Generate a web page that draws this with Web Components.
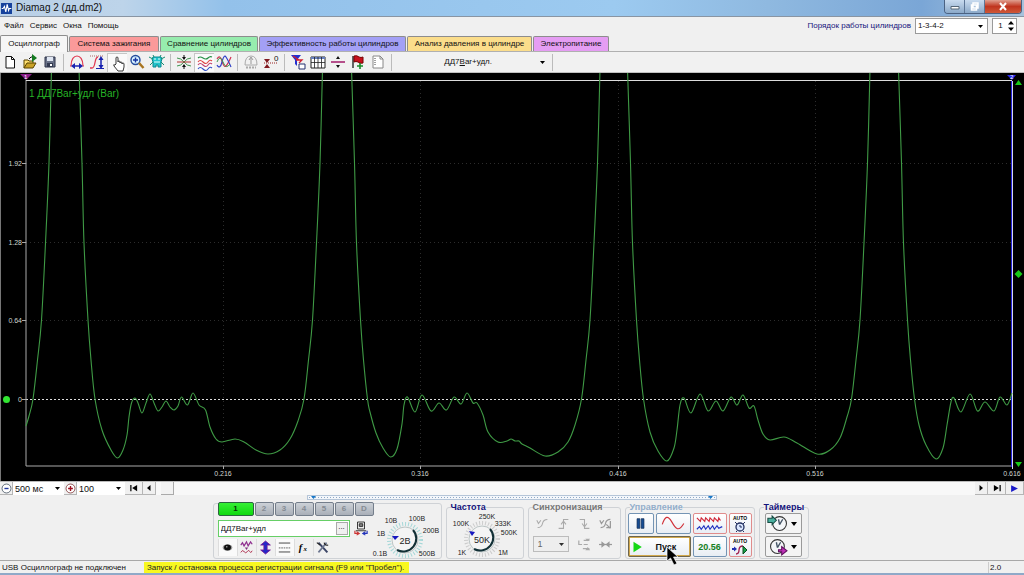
<!DOCTYPE html>
<html lang="ru">
<head>
<meta charset="utf-8">
<title>Diamag 2</title>
<style>
html,body{margin:0;background:#f0f0f0}
body{font:9px/12px "Liberation Sans",Arial,sans-serif;color:#111}
</style>
</head>
<body>
<diamag-app></diamag-app>
<script>
const BASE = `*{box-sizing:border-box}button,select,input{font:inherit;color:inherit;margin:0;padding:0;border-radius:0}
button{display:inline-flex;align-items:center;justify-content:center;background:none;border:0}
select{appearance:none;background:#fff url("data:image/svg+xml,%3Csvg xmlns='http://www.w3.org/2000/svg' width='5' height='3'%3E%3Cpath d='M0 0h5L2.5 3z'/%3E%3C/svg%3E") no-repeat right 4px center;border:0}`;
function define(name, css, html) {
  customElements.define(name, class extends HTMLElement {
    constructor() {
      super();
      this.attachShadow({mode: 'open'});
    }
    connectedCallback() {
      const body = typeof html === 'function' ? html(this) : html;
      this.shadowRoot.innerHTML = `<style>${BASE}${css}</style>${body}`;
    }
  });
}

const ICONS = {
  new: '<path d="M4 2.5h5.500l3 3v8.500h-8.500z" fill="#fff" stroke="#111"/><path d="M9.500 2.500v3h3" fill="none" stroke="#111"/>',
  open: '<path d="M2 14V6h4l1 1h4v2" fill="#ffe070" stroke="#5a4400"/><path d="M2 14l3-5h9l-3 5z" fill="#c9a227" stroke="#5a4400"/><path d="M7 5q2-3 4-2" fill="none" stroke="#111"/><path d="M10 0l5 4-5 4z" fill="#137a20"/>',
  save: '<path d="M3 3h10v10H3z" fill="#6a7288" stroke="#2c3348"/><path d="M5 3h6v4H5z" fill="#dfe6f2"/><path d="M5 9h6v4H5z" fill="#333a50"/><path d="M8 10h2v2H8z" fill="#fff"/>',
  period: '<path d="M1 12h1C2 5 5 2 8 2s6 3 6 10h1" fill="none" stroke="#e03850" stroke-width="1.200"/><path d="M4 12h8" stroke="#1822b0" stroke-width="1.500"/><path d="M6 9l-4 3 4 3zM10 9l4 3-4 3z" fill="#1822b0"/>',
  amplitude: '<path d="M1 14h2c4 0 2-11 6-11" fill="none" stroke="#e03850" stroke-width="1.300"/><path d="M1 2h14" stroke="#a66" stroke-dasharray="1 1"/><path d="M12 5v7" stroke="#1822b0" stroke-width="1.500"/><path d="M9.500 6l2.500-4 2.500 4zM9.500 11l2.500 4 2.500-4z" fill="#1822b0"/><path d="M7 14.500h8" stroke="#1822b0"/>',
  hand: '<path d="M6 9V3q0-1 1-1t1 1v4q0-1 1-1t1 1v1q0-1 1-1t1 1v1q0-1 1-1t1 1v3l-1 4H8l-4-5q-1-2 1-1z" fill="#fff" stroke="#222" stroke-width=".9"/>',
  zoom: '<circle cx="6.500" cy="6" r="4.500" fill="#d6f0ff" stroke="#244c9c" stroke-width="1.400"/><path d="M4 6h5M6.500 3.500v5" stroke="#1330a0" stroke-width="1.400"/><path d="M10 9l4.500 5" stroke="#a87420" stroke-width="2.500"/>',
  probe: '<path d="M4 3h8l1 2-1 3v5H9v-2H7v2H4V8L3 5z" fill="#20c4cc" stroke="#0a8890"/><path d="M0 3l4 2M16 3l-4 2M1 11l3-3M15 11l-3-3M5 3l-1-2M11 3l1-2" stroke="#148c70"/><path d="M5 5h2M9 5h2M5 8h6" stroke="#e6ffff"/>',
  compress: '<path d="M1 4q4 0 7 4t7 4M1 12q4 0 7-4t7-4" fill="none" stroke="#3e9550"/><path d="M1 8h14" stroke="#b03030"/><path d="M8 1v4M8 11v4" stroke="#111"/><path d="M6 3h4L8 6zM6 13h4l-2-3z" fill="#111"/>',
  waves: '<path d="M1 3q2-2 5 0t5 0 4-1" fill="none" stroke="#208c40" stroke-width="1.100"/><path d="M1 7q2-3 5 0t5 0 4-1" fill="none" stroke="#e04040" stroke-width="1.100"/><path d="M1 10q2-3 5 0t5 0 4-1" fill="none" stroke="#c04070" stroke-width="1.100"/><path d="M1 14q2-3 5 0t5 0 4-1" fill="none" stroke="#3050c8" stroke-width="1.100"/>',
  overlap: '<path d="M1 5q3-5 5 2t4 5 5-9" fill="none" stroke="#d03050" stroke-width="1.200"/><path d="M1 11q3 5 5-3t4-5 5 10" fill="none" stroke="#3040c8" stroke-width="1.200"/><path d="M1 8q3-8 6 0t7 2" fill="none" stroke="#409850"/>',
  autocal: '<path d="M2 11q0-9 6-9t6 9z" fill="none" stroke="#aaa"/><path d="M8 4v6M6 6l2-3 2 3" stroke="#999" fill="none"/><path d="M3 13.500h10" stroke="#aaa" stroke-width="2" stroke-dasharray="2 1"/>',
  zero: '<path d="M1 9h14" stroke="#922" stroke-dasharray="1 1"/><path d="M1 5h6L4 9zM1 14h6l-3-4z" fill="#801820"/><text x="11" y="7" font-size="8" fill="#111">0</text>',
  filter: '<path d="M1 1h10L7 6v6L5 10V6z" fill="#2430d0"/><path d="M3 2l6 4M6 6h6l-3 3" stroke="#d02030" fill="none" stroke-width="1.300"/><path d="M9 10h6v5H9z" fill="#fff" stroke="#243070"/>',
  table: '<path d="M1 3h14v11H1z" fill="#fff" stroke="#222"/><path d="M1 3h14v2H1z" fill="#6880c0"/><path d="M4.500 3v11M8 3v11M11.500 3v11M1 8.500h14" stroke="#222" stroke-width=".8"/>',
  divide: '<path d="M1 8h14" stroke="#a01868" stroke-width="1.500"/><path d="M6 5h4L8 2zM6 11h4l-2 3z" fill="#111"/>',
  flag: '<path d="M3 2v12" stroke="#333" stroke-width="1.500"/><path d="M4 2q3-1 5 1 2 1 4 0v6q-3 1-5-1-2-1-4 0z" fill="#c8101c" stroke="#700"/><path d="M10 9v6M7 12h6" stroke="#188c28" stroke-width="1.600"/>',
  notes: '<path d="M3 2h7l3 3v9H3z" fill="#fff" stroke="#888"/><path d="M5 4v8" stroke="#444" stroke-dasharray="1 1"/><path d="M10 2v3h3" fill="none" stroke="#888"/>',
  app: '<path d="M0 0h16v16H0z" fill="#16429c"/><path d="M1 8h2l2-3 2 8 2-11 2 9 1-3h3" fill="none" stroke="#fff" stroke-width="1.600"/>',
  minus: '<circle cx="8" cy="8" r="6.500" fill="#fff" stroke="#234"/><path d="M5 8h6" stroke="#22389c" stroke-width="2"/>',
  plus: '<circle cx="8" cy="8" r="6.500" fill="#fff" stroke="#611"/><path d="M4.500 8h7M8 4.500v7" stroke="#a01020" stroke-width="2"/>',
  first: '<path d="M2 3h2v10H2zM13 3v10L5 8z"/>', prev: '<path d="M11 2v12L4 8z"/>', next: '<path d="M5 2v12l7-6z"/>',
  last: '<path d="M12 3h2v10h-2zM3 3v10l8-5z"/>', play: '<path d="M2 2v12l12-6z" fill="#1818c8"/>',
  bench: '<path d="M4 0h8v8H4z" fill="#eee" stroke="#222"/><path d="M6 2h4v3H6zM2 10h12" fill="#888" stroke="#222"/><path d="M6 13H1v-3M3 11l3 2-3 2" stroke="#c33" fill="none" stroke-width="1.300"/><path d="M10 13h5v-3M13 11l-3 2 3 2" stroke="#23b" fill="none" stroke-width="1.300"/>',
  eye: '<ellipse cx="8" cy="8" rx="7" ry="4.500" fill="#999"/><ellipse cx="8" cy="8" rx="5" ry="4.300" fill="#111"/><circle cx="7" cy="7" r="1" fill="#fff"/>',
  smooth: '<path d="M1 5l2-3 2 4 3-5 2 5 3-5 2 3" fill="none" stroke="#903090" stroke-width="1.500"/><path d="M6 8h4l-2 3z" fill="#803080"/><path d="M1 14q2-4 4-1t4 0 3 0 3-1" fill="none" stroke="#b03050" stroke-width="1.200"/>',
  vertical: '<path d="M8 0l6 5h-4v6h4l-6 5-6-5h4V5H2z" fill="#2428c8" stroke="#7c1890"/>',
  lines: '<path d="M1 2.500h14M1 13.500h14" stroke="#222"/><path d="M1 8.500h14" stroke="#444" stroke-dasharray="2 1"/>',
  fx: '<text x="1" y="13" font-size="15" font-family="Liberation Serif" font-style="italic" font-weight="700">f</text><text x="8" y="13" font-size="10" font-family="Liberation Serif" font-style="italic" font-weight="700">x</text>',
  tools: '<path d="M3 2l11 12" stroke="#3b4566" stroke-width="2.500"/><path d="M13 2L3 14" stroke="#6c7690" stroke-width="2"/><path d="M1 2l4 3M10 2q1 4 5 3" stroke="#222" fill="none" stroke-width="1.400"/>',
  syncA: '<path d="M2 13q5 0 6-5t6-5" fill="none" stroke="#aaa" stroke-width="1.300"/><path d="M1 4l2 4 3-4" fill="none" stroke="#aaa" stroke-width="1.300"/>',
  syncB: '<path d="M2 14h6V3h6M5 9l3-4 3 4" fill="none" stroke="#aaa" stroke-width="1.300"/>',
  syncC: '<path d="M2 3h6v11h6M5 8l3 4 3-4" fill="none" stroke="#aaa" stroke-width="1.300"/>',
  syncD: '<path d="M2 13q5 0 6-5t6-5M1 4l2 4 3-4M9 9l5 5M14 5v8H9" fill="none" stroke="#999" stroke-width="1.500"/>',
  syncE: '<path d="M1 3v5h4M7 3h7M7 8h5M6 13h8" fill="none" stroke="#aaa" stroke-width="1.500"/><path d="M9 1h6l-3 3zM9 15h6l-3-4z" fill="#aaa"/>',
  syncF: '<path d="M0 8h16" stroke="#999" stroke-width="1.500"/><path d="M3 4l5 4-5 4zM13 4L8 8l5 4z" fill="#999"/>',
  pause: '<path d="M3 1h4v14H3zM9 1h4v14H9z" fill="#164c94" stroke="#0a2850"/>',
  sine: '<path d="M-4 9C-1 0 2-1 6 6s7 12 13 2" fill="none" stroke="#d03038" stroke-width="1.200"/>',
  teeth: '<path d="M-7 1l4 4 1-4 4 4 1-4 4 4 1-4 4 4 1-4 4 4 1-4 2 3" fill="none" stroke="#d02838" stroke-width="1.300"/><path d="M-7 14l3-3 2 3 3-4 2 4 3-4 2 4 3-4 2 4 3-4 2 3 4-2" fill="none" stroke="#2030c0" stroke-width="1.300"/>',
  autotimer: '<text x="8" y="4" text-anchor="middle" font-size="5" font-weight="700">AUTO</text><circle cx="8" cy="11" r="4" fill="#dce8ff" stroke="#233060" stroke-width="1.300"/><path d="M3 6l2 2M13 6l-2 2M8 9v2h2M5 15l-1 1M11 15l1 1" stroke="#233060" fill="none"/>',
  autosync: '<text x="8" y="4" text-anchor="middle" font-size="5" font-weight="700">AUTO</text><path d="M0 10h2" stroke="#2030b0" stroke-width="2"/><path d="M2 7.500L5 10l-3 2.500z" fill="#2030b0"/><path d="M4 15q3 0 3-4t4-4" fill="none" stroke="#a02050" stroke-width="1.300"/><path d="M11 7v8l4-4z" fill="#18a048" stroke="#0a5020"/>',
  start: '<path d="M2 1v14l11-7z" fill="#16d816"/>',
  timerin: '<circle cx="9" cy="8" r="6.500" fill="#f4f6f8" stroke="#333"/><path d="M9 9L8 4M9 9l3-5" stroke="#456" stroke-width="1.300"/><path d="M-2 3h4V1l4 4-4 4V7h-4z" fill="#4ab0a0" stroke="#174c44"/>',
  timerout: '<circle cx="7" cy="8" r="6.500" fill="#f4f6f8" stroke="#333"/><path d="M7 9L6 4M7 9l3-5" stroke="#456" stroke-width="1.300"/><path d="M8 11h3V8l5 4-5 4v-3H8z" fill="#c030b8" stroke="#601060"/>'
};
define('app-icon', `:host{display:inline-block;width:var(--size,16px);height:var(--size,16px);flex:none}svg{display:block;width:100%;height:100%;overflow:visible}`,
  el => `<svg viewBox="0 0 16 16" aria-hidden="true">${ICONS[el.getAttribute('name')]}</svg>`);

define('title-bar', `:host{display:flex;align-items:center;height:17px;padding-left:1px;font-size:10px;border-bottom:1px solid #8995a3;
background:radial-gradient(ellipse at 137px 14px,#a5b8a8 0,transparent 9px),radial-gradient(ellipse at 221px 14px,#a5b8b0 0,transparent 8px),radial-gradient(ellipse at 306px 14px,#a9bdb0 0,transparent 9px),radial-gradient(ellipse at 363px 14px,#9db9b4 0,transparent 8px),radial-gradient(ellipse at 419px 14px,#9db9b4 0,transparent 8px),radial-gradient(ellipse at 475px 14px,#9db9b4 0,transparent 9px),radial-gradient(ellipse at 585px 14px,#a5bdb8 0,transparent 8px),radial-gradient(ellipse at 757px 14px,#8fa8b4 0,transparent 8px),radial-gradient(ellipse at 813px 14px,#8fa8b4 0,transparent 8px),radial-gradient(ellipse at 873px 12px,#69718f 0,transparent 13px),linear-gradient(90deg,#b9cfe6,#bdd4ea 12%,#93c1ea 22%,#9ccaf0 60%,#8fb9e0 75%,#7aa6d6 90%,#a8c2dc)}
h1{font:inherit;margin:0 auto 0 4px}
.win{display:flex;align-self:flex-start;margin-right:2px;border:1px solid #4b6282;border-top:0;border-radius:0 0 4px 4px;overflow:hidden}
button{width:20px;height:13px;background:linear-gradient(#c9dbef,#8ba9c9);border-right:1px solid #5d7696}
button:last-child{width:36px;border:0;background:linear-gradient(#e0a090,#c0351f 50%,#cf5838)}
svg{width:10px;height:9px;display:block}`,
`<app-icon name="app" style="--size:11px"></app-icon><h1>Diamag 2 (дд.dm2)</h1>
<div class="win"><button aria-label="Свернуть"><svg><path d="M1 4.500h8v2.500H1z" fill="#fff" stroke="#567"/></svg></button>
<button aria-label="Окно"><svg><path d="M3 1h5v5H3zM1.500 3h5v5h-5z" fill="none" stroke="#fff" stroke-width="1.500"/></svg></button>
<button aria-label="Закрыть"><svg><path d="M2 1l6 7M8 1L2 8" stroke="#fff" stroke-width="2"/></svg></button></div>`);

define('menu-bar', `:host{display:flex;justify-content:space-between;align-items:center;height:18px;padding:0 7px 0 4px;font-size:8px}
nav,.order{display:flex;align-items:center}nav{gap:6px}a{color:inherit;text-decoration:none}
.order{gap:4px;color:#14147c}
select{width:73px;height:16px;border:1px solid #9a9a9a;padding-left:2px;color:#111}
.spin{display:flex;width:25px;height:16px;border:1px solid #9a9a9a;background:#fff;color:#111;align-items:center}
input{width:15px;border:0;background:none;text-align:center;outline:0}.spin svg{width:6px;height:12px}`,
`<nav><a href="#file">Файл</a><a href="#service">Сервис</a><a href="#windows">Окна</a><a href="#help">Помощь</a></nav>
<div class="order"><label for="o">Порядок работы цилиндров</label><select id="o"><option>1-3-4-2</option></select>
<div class="spin"><input aria-label="Цилиндр" value="1"><svg><path d="M0 4.500h6L3 1zM0 7.500h6L3 11z"/></svg></div></div>`);

define('tab-strip', `:host{display:flex;align-items:flex-end;gap:1px;height:17px;border-bottom:1px solid #b0b0b0;font-size:8px}
button{height:15px;width:var(--w);background:var(--c);border:1px solid #8d8d8d;border-bottom:0;border-radius:2px 2px 0 0;white-space:nowrap}
button[aria-selected=true]{height:17px;background:#f6f6f6;margin-bottom:-1px}`,
() => '<button role="tab" aria-selected="true" style="--w:68px">Осциллограф</button>' +
 [['Система зажигания',90,'#fb9a9a'],['Сравнение цилиндров',98,'#97ecae'],['Эффективность работы цилиндров',147,'#a3a0f6'],['Анализ давления в цилиндре',125,'#fbdd8b'],['Электропитание',76,'#e59df3']]
 .map(([t,w,c]) => `<button role="tab" aria-selected="false" style="--w:${w}px;--c:${c}">${t}</button>`).join(''));

define('tool-bar', `:host{display:flex;align-items:center;height:21px;background:#f1f1f1;border-bottom:1px solid #c0c0c0}
button{width:20px;height:19px;flex:none}button.on{background:#fafafa;border:1px solid #c6c6c6;border-width:1px 0 0 1px}
i{width:7px;height:17px;flex:none;background:linear-gradient(#bbb,#bbb) center/1px 100% no-repeat}
button.probe{width:154px;font-size:8px;justify-content:flex-end;gap:48px;padding-right:4px}.probe svg{width:5px;height:3px}`,
() => [['new','open','save'],['period','amplitude','hand','zoom','probe'],['compress','waves','overlap'],['autocal','zero'],['filter','table','divide','flag','notes']]
 .map(g => g.map(n => `<button aria-label="${n}"${n==='hand'||n==='waves'?' class="on"':''}><app-icon name="${n}"></app-icon></button>`).join('')).join('<i></i>') +
 '<i></i><button class="probe"><span>ДД7<u>B</u>ar+удл.</span><svg><path d="M0 0h5L2.500 3z"/></svg></button><i></i>');

/* Trace samples: x position and distance below the zero line. */
const RISE = [[-18.5,0],[-14,-39],[-10,-79],[-6,-156],[-2.5,-236],[0,-330]];
const FALL = [[0,-330],[3,-236],[5,-156],[9,-79],[12,-39],[16,0]];
const shift = (pts, x) => pts.map(p => [p[0] + x, p[1]]);
const TRACE = [
 [[26,27],[29,17],...shift(RISE,51.5)],
 [...shift(FALL,79),[102,31],[111,51],[117.5,59],[123,51],[127,36],[129,18],[131.5,4],[135,-1],[138,4],[142,14],[146,4],[150,-5],[154,4],[158,12],[162,8],[166,2],[170,8],[174,11],[178,7],[181.5,-2],[187.5,6],[193,-6],[199,6],[205.5,11],[210,28],[216,40],[222,43],[235,40],[244,43],[256,51],[268,55],[280,51],[290,40],[298,22],...shift(RISE,322.5)],
 [...shift(FALL,351.5),[370,13],[376,34],[383,49],[390.5,58],[397,50],[402,25],[404,6],[407.5,-2],[415,13],[422,-4],[431,12],[439,4],[446.5,11],[454,-2],[461,5],[467,-6],[473,4],[477,4],[483,16],[488,33],[498,43],[507,42],[511,40],[515,42],[519,42],[522,45],[530,49],[545,57],[558,53],[568,43],[575,26],...shift(RISE,600)],
 [...shift(FALL,627.5),[650,33],[658,52],[667,62],[674,49],[677,31],[680,6],[684,-1],[691,14],[700,-5],[708,12],[716,2],[723,12],[731,-2],[737,6],[743,-4],[749,9],[754,7],[758,21],[763,35],[770,41],[784,38],[797,44],[817,55],[830,51],[840,39],[847,18],...shift(RISE,870)],
 [...shift(FALL,898.5),[919,26],[926,46],[936,60],[943,49],[947,26],[951,3],[954,-1],[961,13],[970,-5],[977.5,12],[985,3],[994,12],[1000,-2],[1007,6],[1012,-6]]
];
function spline(p) {
  let d = `M${p[0]}`;
  for (let i = 0; i < p.length - 1; i++) {
    const a = p[i-1] || p[i], b = p[i], c = p[i+1], e = p[i+2] || c;
    d += `C${b[0]+(c[0]-a[0])/6} ${b[1]+(c[1]-a[1])/6} ${c[0]-(e[0]-b[0])/6} ${c[1]-(e[1]-b[1])/6} ${c[0]} ${c[1]}`;
  }
  return d;
}
define('scope-plot', `:host{display:block;background:#000}svg{display:block;width:100%;height:auto}
.ax{font-size:7px;fill:#cfd6cf}.name{font-size:10px;fill:#26b426}`,
() => `<svg viewBox="0 0 1024 408" role="img" aria-label="Осциллограмма"><path d="M.5 0V408" stroke="#777"/>
<g stroke="#2c2c2c" stroke-dasharray="1 3" fill="none"><path d="M26 90.500H1012M26 169.500H1012M26 247.500H1012M223.500 8V393M420.500 8V393M618.500 8V393M815.500 8V393"/></g>
<path d="M26 326.500H1012" stroke="#ddd" stroke-dasharray="2 2"/>
<path d="M26 7V393M22 90.500h4M22 169.500h4M22 247.500h4M22 326.500h4M26 393H1012M223.500 393v3M420.500 393v3M618.500 393v3M815.500 393v3" stroke="#aaa" fill="none"/>
<path d="M26 7.500H1012" stroke="#ddd"/><path d="M1011.500 8V394" stroke="#2222d8"/><path d="M1012.500 8V396" stroke="#d8d8f0"/>
<path d="M20 1h12l-6 6z" fill="#8a1c8a"/><path d="M1007 2h9l-4 5z" fill="#2a2aee"/><text x="24" y="6" font-size="6" fill="#fff">1</text><text x="1010" y="6" font-size="6" fill="#fff">2</text>
<g fill="none" stroke="#3f9a45" stroke-width="1.100" transform="translate(0 326)">${TRACE.map(t => `<path d="${spline(t)}"/>`).join('')}</g>
<circle cx="6.500" cy="326.500" r="3.500" fill="#32e632"/><g fill="#18c818"><path d="M1015 12h7l-3.500-5zM1015 389h7l-3.500 5zM1018.500 197l4 4-4 4-4-4z"/></g>
<text class="name" x="29" y="24">1 ДД7Bar+удл (Bar)</text>
<g class="ax" text-anchor="end"><text x="22" y="93">1.92</text><text x="22" y="172">1.28</text><text x="22" y="250">0.64</text><text x="22" y="329">0</text></g>
<g class="ax" text-anchor="middle"><text x="223" y="403">0.216</text><text x="420" y="403">0.316</text><text x="618" y="403">0.416</text><text x="815" y="403">0.516</text><text x="1012" y="403">0.616</text></g></svg>`);

define('time-scroll', `:host{display:flex;height:14px;background:#f8f8f8;border-top:1px solid #bbb;font-size:9px}
button{width:13px;flex:none;background:#f0f0f0;border:1px solid #b5b5b5;border-width:0 1px 1px 0}button.w{width:18px}
select{width:51px;padding-left:2px;background-color:#fff}select.n{width:48px}
input{appearance:none;flex:1;min-width:0;background:none;padding-left:5px}
input::-webkit-slider-thumb{appearance:none;width:13px;height:13px;background:#f2f2f2;border:1px solid #aaa;border-width:0 1px 1px 0}`,
`<button aria-label="Сжать"><app-icon name="minus" style="--size:11px"></app-icon></button><select aria-label="Развёртка"><option>500 мс</option></select>
<button aria-label="Растянуть"><app-icon name="plus" style="--size:11px"></app-icon></button><select class="n" aria-label="Масштаб"><option>100</option></select>
<button class="w" aria-label="В начало"><app-icon name="first" style="--size:10px"></app-icon></button><button aria-label="Назад"><app-icon name="prev" style="--size:8px"></app-icon></button>
<input type="range" value="0" aria-label="Прокрутка">
<button aria-label="Вперёд"><app-icon name="next" style="--size:8px"></app-icon></button><button class="w" aria-label="В конец"><app-icon name="last" style="--size:10px"></app-icon></button><button class="w" aria-label="Следить"><app-icon name="play" style="--size:9px"></app-icon></button>`);

define('group-box', `:host{display:block}fieldset{position:relative;min-width:0;height:57px;margin:0;padding:0 4px;border:1px solid #cfd2d6;border-radius:3px}
legend{font-weight:700;font-size:9px;line-height:10px;padding:0;color:var(--legend,#14147c)}
:host([plain]) fieldset{height:56px;margin-top:1px}`,
el => `<fieldset>${el.hasAttribute('caption') ? `<legend>${el.getAttribute('caption')}</legend>` : ''}<slot></slot></fieldset>`);

const KNOBS = {
  volt: {w:68, cx:31, cy:38, ring:'#a6d8d8', value:'2В', ptr:'M18 34l7 0-4 4z', labels:[[17,21,'10В'],[43,19,'100В'],[57,31,'200В'],[53,54,'500В'],[7,34,'1В'],[6,54,'0.1В']]},
  freq: {w:67, cx:31, cy:27, ring:'#ccc', value:'50K', ptr:'M18 19l6 1-3 4z', labels:[[10,14,'100K'],[36,7,'250K'],[52,14,'333K'],[58,23,'500K'],[52,43,'1M'],[11,43,'1K']]}
};
define('rotary-knob', `:host{display:block}svg{display:block;overflow:visible}text{text-anchor:middle;font-size:7px;fill:#222}.v{font-size:9px}`,
el => { const k = KNOBS[el.getAttribute('kind')]; return `<svg width="${k.w}" height="${k.cy+18}" role="img" aria-label="${k.value}">
<circle cx="${k.cx}" cy="${k.cy}" r="16" fill="none" stroke="${k.ring}" stroke-width="4" stroke-dasharray="1 2"/>
<circle cx="${k.cx}" cy="${k.cy}" r="13" fill="#f4f4f4" stroke="#bbc4c4" stroke-width="1"/>
<path d="M${k.cx+8} ${k.cy-10}A13 13 0 0 1 ${k.cx-8} ${k.cy+10}" fill="none" stroke="#123036" stroke-width="2"/><path d="${k.ptr}" fill="#1818c0"/>
<text class="v" x="${k.cx}" y="${k.cy+4}">${k.value}</text>${k.labels.map(l => `<text x="${l[0]}" y="${l[1]}">${l[2]}</text>`).join('')}</svg>`; });

define('channel-panel', `:host{display:flex;justify-content:space-between;margin-top:-2px}
.left{width:160px}.ch{display:flex;gap:1px}.ch button{width:19px;height:14px;background:linear-gradient(#ccd1d7,#a9afb8);border:1px solid #747e8b;border-radius:2px;color:#858b93;font-size:8px;font-weight:700}
.ch button.on{width:36px;background:linear-gradient(#35f035,#10d810);border-color:#2b6440;color:#063006}
.row{display:flex;align-items:center;gap:4px;margin-top:4px}.box{display:flex;width:132px;height:17px;border:1px solid #66cf66;background:#fff;padding:1px}
input{flex:1;min-width:0;border:0;outline:0;font-size:8px;padding-left:1px}.box button{width:12px;border:1px solid #aaa;background:#f0f0f0;font-size:8px;line-height:8px;padding-bottom:4px}
.tools{gap:0;margin-top:2px}.tools button{width:19px;height:17px;border-left:1px solid #ddd}.tools button.t{background:#fafafa}`,
`<div class="left"><div class="ch"><button class="on">1</button><button>2</button><button>3</button><button>4</button><button>5</button><button>6</button><button>D</button></div>
<div class="row"><div class="box"><input aria-label="Датчик" value="ДД7Bar+удл"><button>...</button></div><app-icon name="bench" style="--size:14px"></app-icon></div>
<div class="row tools"><button class="t" aria-label="Видимость"><app-icon name="eye" style="--size:11px"></app-icon></button><button aria-label="Сглаживание"><app-icon name="smooth" style="--size:13px"></app-icon></button><button aria-label="Положение"><app-icon name="vertical" style="--size:13px"></app-icon></button><button class="t" aria-label="Линии"><app-icon name="lines" style="--size:13px"></app-icon></button><button aria-label="Функция"><app-icon name="fx" style="--size:11px"></app-icon></button><button aria-label="Настройки"><app-icon name="tools" style="--size:13px"></app-icon></button></div></div>
<rotary-knob kind="volt"></rotary-knob>`);

define('sync-panel', `:host{display:grid;grid-template-columns:repeat(4,20px);gap:3px 1px;padding-top:2px}button{height:18px}select{grid-column:span 2;width:36px;height:16px;border:1px solid #b0b0b0;background-color:#eee;color:#444;padding-left:4px;opacity:.8;align-self:center}`,
`${['syncA','syncB','syncC','syncD'].map(n => `<button disabled aria-label="${n}"><app-icon name="${n}" style="--size:13px"></app-icon></button>`).join('')}<select disabled aria-label="Канал"><option>1</option></select><button disabled aria-label="Уровень"><app-icon name="syncE" style="--size:13px"></app-icon></button><button disabled aria-label="Центр"><app-icon name="syncF" style="--size:13px"></app-icon></button>`);

define('control-panel', `:host{display:grid;grid-template-columns:26px 35px 34px 23px;gap:2px;margin:1px -2px 0;position:relative}
button{height:21px;border:1px solid #7494b4;border-radius:2px;background:linear-gradient(#fff,#e9eef4)}
.r{border-color:#e08c8c}button.go{grid-column:span 2;border:2px solid #d2a94d;outline:1px solid #6d6650;outline-offset:-1px;gap:12px;font-weight:700;font-size:9px;justify-content:flex-start;padding-left:2px}
.rate{color:#14801c;font-weight:700;font-size:9px}.cursor{position:absolute;left:38px;top:33px;width:14px;height:20px;pointer-events:none}`,
`<button aria-label="Пауза"><app-icon name="pause" style="--size:11px"></app-icon></button><button aria-label="Синус"><app-icon name="sine" style="--size:15px"></app-icon></button><button class="r" aria-label="Сигналы"><app-icon name="teeth" style="--size:14px"></app-icon></button><button class="r" aria-label="Автотаймер"><app-icon name="autotimer"></app-icon></button>
<button class="go"><app-icon name="start" style="--size:12px"></app-icon>Пуск</button><button class="rate">20.56</button><button class="r" aria-label="Автосинхронизация"><app-icon name="autosync"></app-icon></button>
<svg class="cursor" viewBox="0 0 14 20"><path d="M1 1v14l3.500-3 3.500 7 3-1.500-3.500-6.500H12z" fill="#000" stroke="#fff" stroke-width=".7"/></svg>`);

define('timer-panel', `:host{display:grid;gap:2px;margin:1px 1px 0}button{width:37px;height:21px;gap:4px;border:1px solid #9a9a9a;border-radius:2px;background:#f4f4f4}button:first-child{border-color:#e08c8c}svg{width:6px;height:4px}`,
`<button aria-label="Таймер пуска"><app-icon name="timerin" style="--size:17px"></app-icon><svg><path d="M0 0h6L3 4z"/></svg></button><button aria-label="Таймер остановки"><app-icon name="timerout" style="--size:17px"></app-icon><svg><path d="M0 0h6L3 4z"/></svg></button>`);

define('control-deck', `:host{display:block;background:#f0f0f0;height:66px;border-bottom:1px solid #a8a8a8}
.split{width:40%;height:5px;margin:0 auto 2px;border:1px solid #b5c5d8;background:radial-gradient(circle,#8fa8c4 0,transparent 1px) 0 0/3px 3px #f4f7fb;display:flex;justify-content:space-between;padding:0 3px}
.split svg{width:5px;height:3px}.groups{display:flex;justify-content:center;gap:4px;padding-right:3px}
.a{width:229px}.b{width:78px}.c{width:93px}.d{width:130px}.e{width:50px}`,
`<div class="split"><svg><path d="M0 0h5L2.500 3z" fill="#1878c8"/></svg><svg><path d="M0 0h5L2.500 3z" fill="#1878c8"/></svg></div>
<div class="groups"><group-box class="a" plain><channel-panel></channel-panel></group-box>
<group-box class="b" caption="Частота"><rotary-knob kind="freq"></rotary-knob></group-box>
<group-box class="c" caption="Синхронизация" style="--legend:#777"><sync-panel></sync-panel></group-box>
<group-box class="d" caption="Управление" style="--legend:#93aecb"><control-panel></control-panel></group-box>
<group-box class="e" caption="Таймеры"><timer-panel></timer-panel></group-box></div>`);

define('status-bar', `:host{display:flex;align-items:center;height:14px;border-bottom:2px solid #8fa9c8;padding:0 2px;font-size:8px;line-height:11px;white-space:nowrap}
.dev{width:142px}mark{background:#f8f820;color:#222;padding:0 5px 0 3px}.ver{margin-left:auto;width:34px;border-left:1px solid #ccc;padding-left:1px}`,
`<span class="dev">USB Осциллограф не подключен</span><mark>Запуск / остановка процесса регистрации сигнала (F9 или "Пробел").</mark><span class="ver">2.0</span>`);

define('diamag-app', `:host{display:flex;flex-direction:column}`,
`<title-bar></title-bar><menu-bar></menu-bar><tab-strip></tab-strip><tool-bar></tool-bar><scope-plot></scope-plot><time-scroll></time-scroll><control-deck></control-deck><status-bar></status-bar>`);
</script>
</body>
</html>
